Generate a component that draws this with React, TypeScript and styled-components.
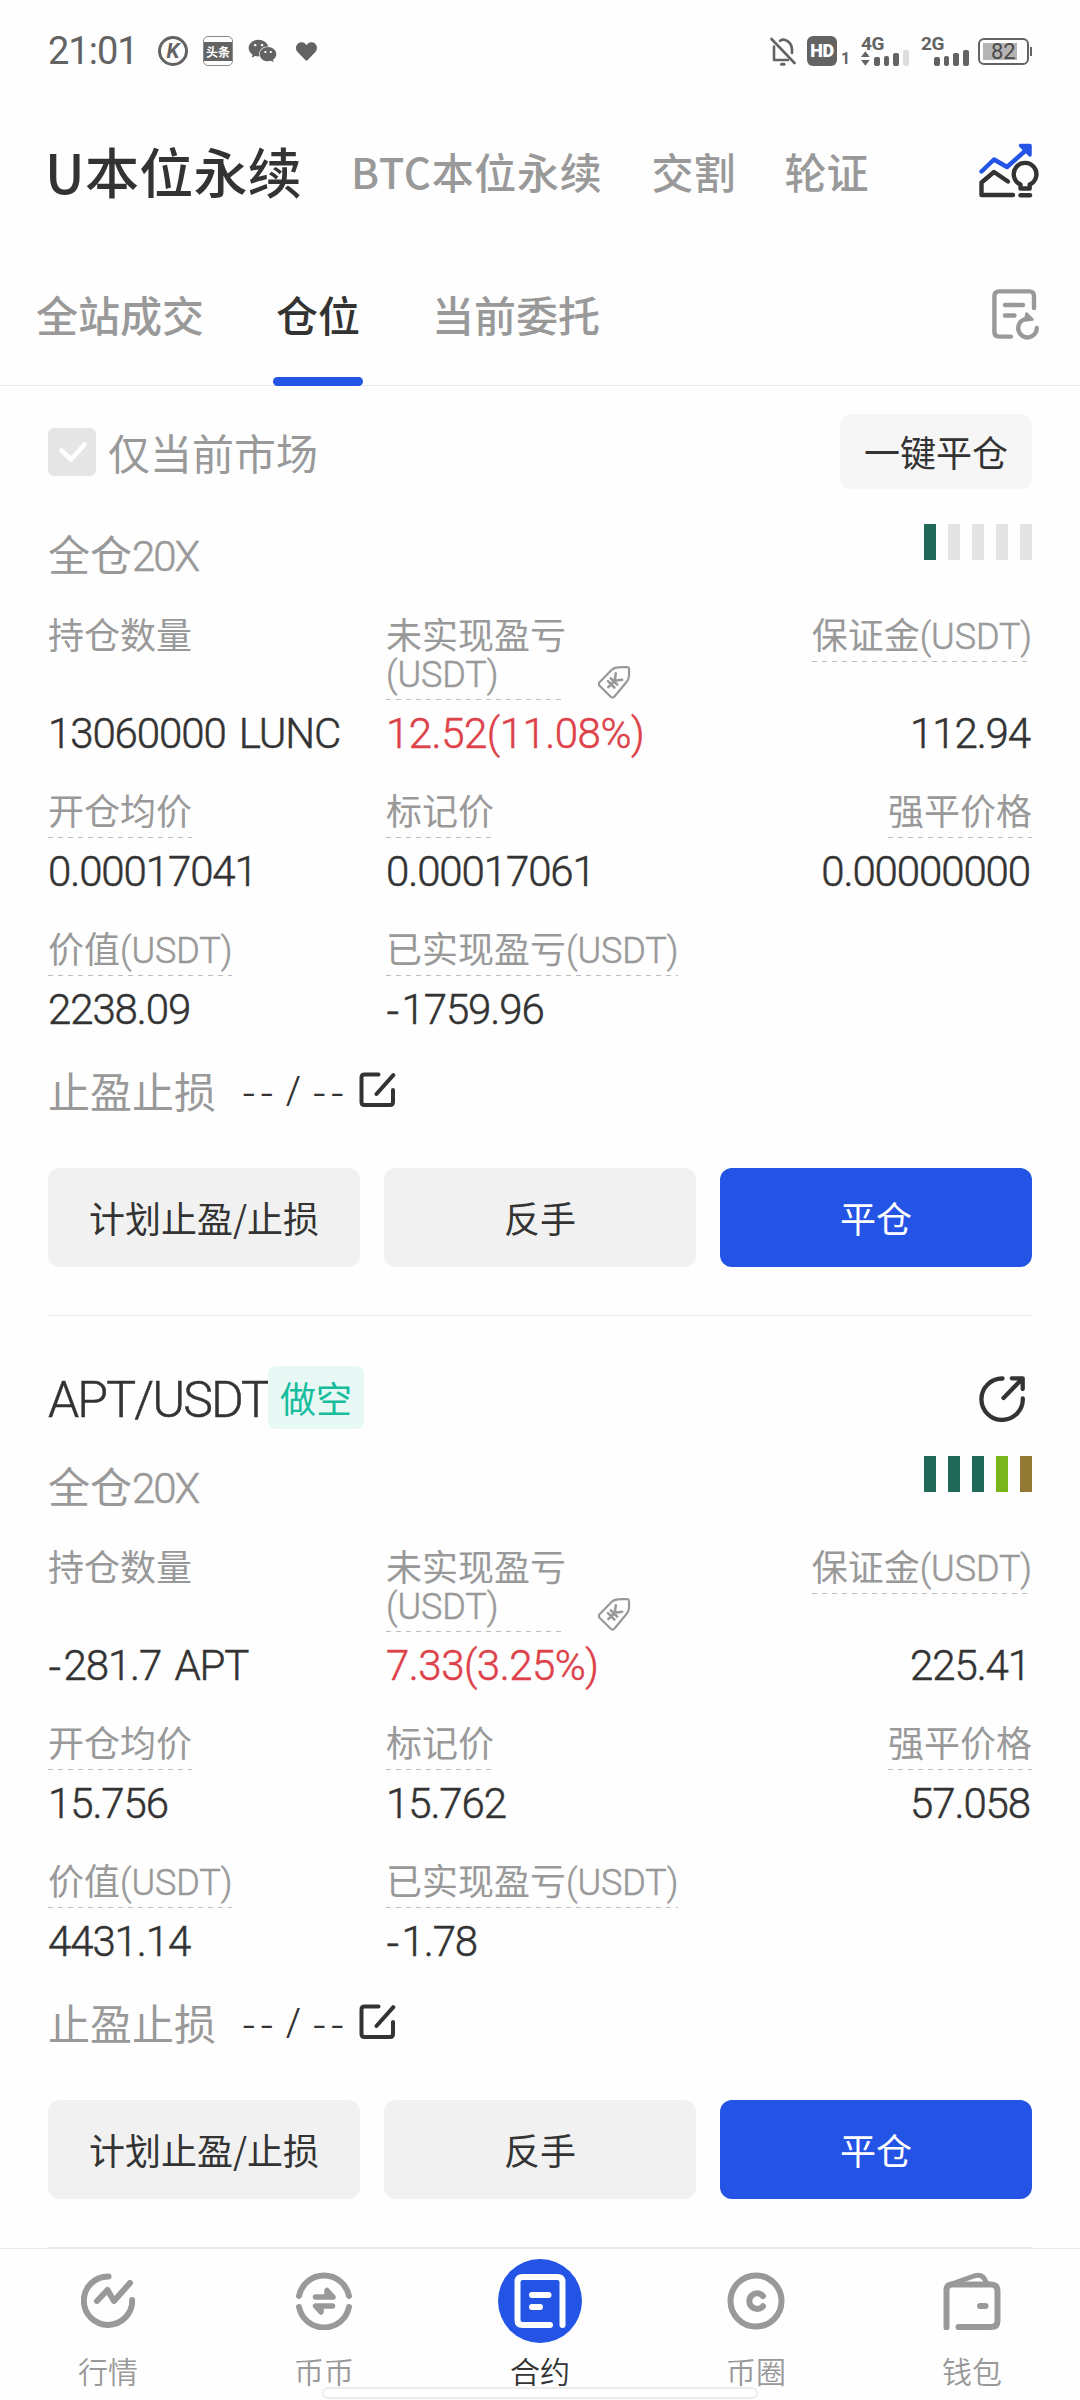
import React from "react";
import styled, { createGlobalStyle } from "styled-components";
import { FaHeart, FaWeixin } from "react-icons/fa";

const INK = "#333333";
const MUTED = "#999999";
const BLUE = "#2454e6";
const STATUS = "#636363";
const CJK = `"Noto Sans CJK SC", sans-serif`;

const GlobalStyle = createGlobalStyle`
  * { box-sizing: border-box; }
  body { margin: 0; background: #fefefe; font-family: ${CJK}; color: ${INK}; }
`;

const Screen = styled.div`
  width: 1080px;
  height: 2400px;
  display: flex;
  flex-direction: column;
  background: #fefefe;
  overflow: hidden;
  & > * { flex-shrink: 0; }
`;

/* Status bar */
const StatusBar = styled.header`
  height: 102px;
  padding: 0 48px 0 48px;
  display: flex;
  align-items: center;
  justify-content: space-between;
  color: ${STATUS};
  font-family: Roboto, sans-serif;
`;
const StatusGroup = styled.div`
  display: flex;
  align-items: center;
`;
const Clock = styled.span`
  width: 110px;
  font-size: 38px;
  line-height: 44px;
  letter-spacing: -1px;
  white-space: nowrap;
`;
const RoundApp = styled.span`
  width: 30px;
  height: 30px;
  border: 3px solid ${STATUS};
  border-radius: 50%;
  display: flex;
  align-items: center;
  justify-content: center;
  font-size: 21px;
  font-weight: 700;
  font-style: italic;
  line-height: 24px;
`;
const NewsApp = styled.span`
  width: 30px;
  height: 30px;
  margin-left: 15px;
  border: 1px solid #8a8a8a;
  border-radius: 5px;
  display: flex;
  align-items: center;
`;
const NewsBand = styled.span`
  width: 28px;
  height: 19px;
  display: flex;
  align-items: center;
  justify-content: center;
  background: ${STATUS};
  color: #fff;
  font: 700 12px/19px ${CJK};
`;
const ChatMark = styled(FaWeixin)`
  width: 29px;
  height: 28px;
  margin-left: 15px;
`;
const HeartMark = styled(FaHeart)`
  width: 23px;
  height: 21px;
  margin-left: 18px;
`;
const HdBadge = styled.span`
  width: 30px;
  height: 30px;
  margin-left: 11px;
  border-radius: 6px;
  display: flex;
  align-items: center;
  justify-content: center;
  background: ${STATUS};
  color: #fff;
  font-size: 18px;
  font-weight: 900;
  line-height: 20px;
  letter-spacing: -0.5px;
`;
const HdSlot = styled.span`
  margin: 16px 0 0 4px;
  width: 8px;
  font-size: 16px;
  font-weight: 700;
  line-height: 16px;
`;
const Signal = styled.div<{ $left: number }>`
  width: 48px;
  height: 30px;
  margin-left: ${(p) => p.$left}px;
  display: flex;
  flex-direction: column;
`;
const SignalName = styled.span`
  height: 14px;
  font-size: 19px;
  font-weight: 700;
  line-height: 16px;
  letter-spacing: -0.3px;
`;
const SignalRow = styled.div`
  height: 16px;
  display: flex;
  align-items: flex-end;
  gap: 4px;
`;
const SignalArrows = styled.svg`
  width: 9px;
  height: 15px;
`;
const SignalBar = styled.i<{ $h: number; $off?: boolean }>`
  width: 6px;
  height: ${(p) => p.$h}px;
  border-radius: 2px;
  background: ${(p) => (p.$off ? "#dddddd" : STATUS)};
`;
const Battery = styled.div`
  width: 51px;
  height: 27px;
  margin-left: 9px;
  padding: 3px;
  border: 2px solid ${STATUS};
  border-radius: 6px;
  display: flex;
`;
const BatteryFill = styled.div`
  width: 34px;
  height: 17px;
  padding-left: 8px;
  background: #b4b4b4;
  color: #4a4a4a;
  font-size: 22px;
  line-height: 18px;
`;
const BatteryTip = styled.i`
  width: 2px;
  height: 9px;
  margin-left: 1px;
  background: ${STATUS};
`;

/* Market header and section tabs */
const MarketHeader = styled.nav`
  height: 142px;
  padding: 0 41px 5px 45px;
  display: flex;
  align-items: center;
  gap: 49px;
`;
const Market = styled.a<{ $active?: boolean; $ls?: number }>`
  font-size: ${(p) => (p.$active ? 54 : 42)}px;
  line-height: 60px;
  font-weight: 500;
  letter-spacing: ${(p) => p.$ls ?? 0}px;
  white-space: nowrap;
  color: ${(p) => (p.$active ? INK : MUTED)};
`;
const IconSlot = styled.span`
  margin-left: auto;
  display: flex;
`;
const TabBar = styled.nav`
  height: 142px;
  padding: 0 40px 0 36px;
  display: flex;
  align-items: center;
  gap: 72px;
  border-bottom: 1px solid #e9e9e9;
`;
const Tab = styled.a<{ $active?: boolean }>`
  position: relative;
  height: 142px;
  font-size: 42px;
  line-height: 139px;
  font-weight: 500;
  color: ${(p) => (p.$active ? INK : MUTED)};
  &::after {
    content: "";
    display: ${(p) => (p.$active ? "block" : "none")};
    position: absolute;
    left: -3px;
    right: -3px;
    bottom: 0;
    height: 9px;
    border-radius: 5px;
    background: ${BLUE};
  }
`;

/* Filter */
const FilterRow = styled.div`
  margin: 28px 48px 0;
  height: 75px;
  display: flex;
  align-items: center;
`;
const CheckBox = styled.span`
  width: 48px;
  height: 48px;
  border-radius: 6px;
  background: #e6e6e6;
  display: flex;
`;
const FilterLabel = styled.span`
  margin-left: 12px;
  font-size: 42px;
  line-height: 60px;
  color: ${MUTED};
`;
const CloseAll = styled.button`
  width: 192px;
  height: 75px;
  margin-left: auto;
  padding: 0;
  border: 0;
  border-radius: 12px;
  background: #f6f6f6;
  color: ${INK};
  font: 400 36px/75px ${CJK};
`;

/* Position card */
const Card = styled.section<{ $top: number }>`
  margin: 0 48px;
  padding-top: ${(p) => p.$top}px;
  border-bottom: 1px solid #e8e8e8;
`;
const CardHead = styled.div`
  height: 63px;
  margin-bottom: 27px;
  display: flex;
  align-items: center;
`;
const Pair = styled.h2`
  width: 220px;
  margin: 5px 0 0;
  font: 300 50px/58px Roboto, sans-serif;
  letter-spacing: -1.9px;
  -webkit-text-stroke: 0.5px currentColor;
  white-space: nowrap;
`;
const Side = styled.span`
  width: 96px;
  height: 63px;
  border-radius: 8px;
  background: #e7f8f5;
  color: #17bd9d;
  font-size: 36px;
  line-height: 63px;
  text-align: center;
`;
const ShareSlot = styled.span`
  margin: 3px 7px 0 auto;
  display: flex;
`;
const LeverageRow = styled.div`
  height: 56px;
  display: flex;
  justify-content: space-between;
`;
const Leverage = styled.span`
  align-self: flex-end;
  margin-bottom: 2px;
  font-size: 42px;
  line-height: 50px;
  color: ${MUTED};
`;
const Latin = styled.span<{ $ls: number }>`
  font-family: Roboto, sans-serif;
  font-weight: 300;
  line-height: 28px;
  letter-spacing: ${(p) => p.$ls}px;
  -webkit-text-stroke: 0.5px currentColor;
`;
const RiskBars = styled.div`
  height: 36px;
  display: flex;
  gap: 12px;
`;
const RiskBar = styled.i<{ $color: string }>`
  width: 12px;
  background: ${(p) => p.$color};
`;
const Metrics = styled.div`
  margin-top: 36px;
  display: flex;
  flex-direction: column;
  gap: 34px;
`;
const MetricRow = styled.div`
  display: grid;
  grid-template-columns: 338px 338px 1fr;
`;
const Metric = styled.div<{ $end?: boolean }>`
  display: flex;
  flex-direction: column;
  justify-content: space-between;
  align-items: ${(p) => (p.$end ? "flex-end" : "flex-start")};
  gap: 10px;
`;
const LabelLine = styled.div`
  display: flex;
  align-items: flex-end;
`;
const Label = styled.span<{ $dashed?: boolean; $width?: number }>`
  width: ${(p) => (p.$width ? `${p.$width}px` : "auto")};
  margin-top: -2px;
  padding-bottom: 10px;
  font-size: 36px;
  line-height: 38px;
  white-space: nowrap;
  color: ${MUTED};
  background: ${(p) =>
    p.$dashed
      ? "repeating-linear-gradient(90deg, #bcbcbc 0 5px, transparent 5px 10px) left bottom / 100% 1px no-repeat"
      : "none"};
`;
const TagSlot = styled.span`
  margin: 0 0 1px 36px;
  display: flex;
`;
const Value = styled.span<{ $color?: string; $end?: boolean }>`
  padding-right: ${(p) => (p.$end ? 2 : 0)}px;
  font: 300 42px/48px Roboto, sans-serif;
  letter-spacing: ${(p) => (p.$color ? -0.5 : -1.1)}px;
  word-spacing: 4px;
  -webkit-text-stroke: 0.5px currentColor;
  white-space: nowrap;
  color: ${(p) => p.$color ?? INK};
`;
const Sign = styled.span`
  font-family: "Noto Sans", sans-serif;
  line-height: 0;
  letter-spacing: 2px;
`;
const StopRow = styled.div`
  height: 60px;
  margin-top: 26px;
  display: flex;
  align-items: center;
  font-size: 42px;
  line-height: 60px;
  color: ${MUTED};
`;
const StopValue = styled.span`
  width: 117px;
  margin: 0 0 0 26px;
  font: 300 42px/60px "Noto Sans", sans-serif;
  letter-spacing: 4.4px;
  word-spacing: -7.5px;
  white-space: pre;
  color: ${INK};
`;
const Actions = styled.div`
  margin: 48px 0 48px;
  display: grid;
  grid-template-columns: repeat(3, 1fr);
  gap: 24px;
`;
const Action = styled.button<{ $primary?: boolean }>`
  height: 99px;
  padding: 0;
  border: 0;
  border-radius: 12px;
  background: ${(p) => (p.$primary ? BLUE : "#f1f1f1")};
  color: ${(p) => (p.$primary ? "#fff" : INK)};
  font: 400 36px/99px ${CJK};
`;

/* Bottom navigation */
const BottomNav = styled.nav`
  position: relative;
  height: 152px;
  border-top: 1px solid #e8e8e8;
  display: grid;
  grid-template-columns: repeat(5, 1fr);
`;
const NavItem = styled.a<{ $active?: boolean }>`
  padding-top: 10px;
  display: flex;
  flex-direction: column;
  align-items: center;
  font-size: 30px;
  font-weight: 350;
  line-height: 38px;
  color: ${(p) => (p.$active ? INK : MUTED)};
`;
const NavIcon = styled.span<{ $active?: boolean }>`
  width: 84px;
  height: 84px;
  margin-bottom: 8px;
  border-radius: 50%;
  display: flex;
  align-items: center;
  justify-content: center;
  background: ${(p) => (p.$active ? BLUE : "transparent")};
`;
const HomeIndicator = styled.i`
  position: absolute;
  left: 322px;
  bottom: 1px;
  width: 436px;
  height: 12px;
  border: 2px solid #ececec;
  border-radius: 6px;
  background: #fff;
`;

const line = {
  fill: "none",
  strokeLinecap: "round" as const,
  strokeLinejoin: "round" as const,
};

const BellOffIcon = () => (
  <svg width="26" height="29" viewBox="0 0 26 29" {...line} stroke={STATUS} strokeWidth="2.6">
    <path d="M1.500 2 24.500 26" />
    <path d="M4 9.500V23H18M10 3.800 12.500 2.500C18 2.800 22 7 22 12.500V16" />
    <path d="M11.500 27.200h2.500" strokeWidth="3" />
  </svg>
);
const TrendIcon = () => (
  <svg width="60" height="56" viewBox="0 0 60 56" {...line} strokeWidth="4.4">
    <path d="M2.500 28.500 15 16.500 28 24 50 4.500" stroke={BLUE} />
    <path d="M41.500 2.500H51V12z" stroke={BLUE} fill={BLUE} strokeWidth="3.500" />
    <path d="M29 38.500 15 29 2.500 39.500V52H34" stroke={INK} />
    <path d="M41.500 45.500V41.500A11.300 11.300 0 1 1 50.700 41.500V45.500Z" stroke={INK} />
    <path d="M41.500 52.300H51" stroke={INK} />
  </svg>
);
const HistoryIcon = () => (
  <svg width="48" height="51" viewBox="0 0 48 51" {...line} stroke={MUTED} strokeWidth="4.400">
    <path d="M42 19V7q0-4.600-4.600-4.600H7Q2.400 2.400 2.400 7v36q0 4.600 4.600 4.600H19" />
    <path d="M13 16H31M13 26.500H22.500" />
    <path d="M32 30.500A9.300 9.300 0 1 0 44.800 39" />
    <path d="M34.500 24.500 40.500 30.500 33 31.500Z" fill={MUTED} strokeWidth="2.500" />
  </svg>
);
const CheckIcon = () => (
  <svg width="48" height="48" viewBox="0 0 48 48" {...line} stroke="#fff" strokeWidth="4.500">
    <path d="M13.500 22.500 23 31.500 36.500 16.500" />
  </svg>
);
const TagIcon = () => (
  <svg width="33" height="33" viewBox="0 0 33 33" {...line} stroke={MUTED} strokeWidth="2.200">
    <path d="M1.800 16 13.500 4Q16 1.500 20 1.300L28.500 1q2.500 0 2.600 2.500L31 10q-.300 3.500-2.500 6L16.500 30.500q-2 2-4 0L1.800 20q-2-2 0-4Z" />
    <g transform="translate(16 15.500) rotate(45)" strokeWidth="2.600">
      <path d="M0 8V-1M-4.500-7 0-1 4.500-7M-4.500 0H4.500M-4.500 4H4.500" />
    </g>
  </svg>
);
const EditIcon = () => (
  <svg width="37" height="36" viewBox="0 0 37 36" {...line} stroke={INK} strokeWidth="4">
    <path d="M19.500 2.500H5.500q-3 0-3 3V30q0 3 3 3H31q3 0 3-3V18" />
    <path d="M34.300 3.200 17.500 22" />
  </svg>
);
const ShareIcon = () => (
  <svg width="46" height="46" viewBox="0 0 46 46" {...line} stroke={INK} strokeWidth="4.300">
    <path d="M23.500 2.500A20.700 20.700 0 1 0 43.800 22.500" />
    <path d="M24.500 22 43 3M32.800 2.300H43.700V13" />
  </svg>
);
const QuotesIcon = () => (
  <svg width="54" height="56" viewBox="0 0 54 56" {...line} stroke={MUTED} strokeWidth="6">
    <path d="M27.500 3.500A24.200 24.200 0 1 0 51.200 27" />
    <path d="M16 28 26.500 17 33 28 49 10" />
  </svg>
);
const SwapIcon = () => (
  <svg width="56" height="58" viewBox="0 0 56 58" {...line} stroke={MUTED} strokeWidth="6">
    <path d="M3 24A25.500 25.500 0 0 1 53 24M3 35A25.500 25.500 0 0 0 53 35" />
    <path d="M19.500 25H37L31 18.500V25M36.500 34H19.500L25 40V34" strokeWidth="5.500" />
  </svg>
);
const ContractIcon = () => (
  <svg width="84" height="84" viewBox="0 0 84 84" {...line} stroke="#fff" strokeWidth="6">
    <path d="M64.500 66V23q0-5-5-5H24.500q-5 0-5 5V61q0 5 5 5H52" />
    <path d="M34 36H50.500M34 48H42" />
  </svg>
);
const CommunityIcon = () => (
  <svg width="58" height="58" viewBox="0 0 58 58" {...line} stroke={MUTED} strokeWidth="6">
    <circle cx="29" cy="29" r="25.500" />
    <path d="M36 24A7.800 7.800 0 1 0 36 34.300" />
  </svg>
);
const WalletIcon = () => (
  <svg width="58" height="58" viewBox="0 0 58 58" {...line} stroke={MUTED} strokeWidth="6">
    <path d="M3.500 55.500V18q0-5.500 5.500-5.500H48q6.500 0 6.500 6.500V49q0 6-6.500 6H15.500" />
    <path d="M8.500 12 31 4Q40 1 43.500 11" strokeWidth="5" />
    <path d="M37 34H42.500" />
  </svg>
);

type MetricData = {
  label: React.ReactNode;
  value: string;
  dashed?: boolean;
  width?: number;
  tag?: boolean;
  color?: string;
};
type Position = {
  pair?: string;
  side?: string;
  risk: string[];
  rows: MetricData[][];
};

const Usdt = () => <Latin $ls={-0.1}>(USDT)</Latin>;

const buildRows = (v: string[]): MetricData[][] => [
  [
    { label: "持仓数量", value: v[0] },
    { label: <>未实现盈亏<br /><Usdt /></>, value: v[1], dashed: true, width: 176, tag: true, color: "#dd4149" },
    { label: <>保证金<Usdt /></>, value: v[2], dashed: true },
  ],
  [
    { label: "开仓均价", value: v[3], dashed: true },
    { label: "标记价", value: v[4], dashed: true },
    { label: "强平价格", value: v[5], dashed: true },
  ],
  [
    { label: <>价值<Usdt /></>, value: v[6], dashed: true },
    { label: <>已实现盈亏<Usdt /></>, value: v[7], dashed: true },
  ],
];

const GREEN = "#206857";
const EMPTY = "#e4e4e4";

const positions: Position[] = [
  {
    risk: [GREEN, EMPTY, EMPTY, EMPTY, EMPTY],
    rows: buildRows(["13060000 LUNC", "12.52(11.08%)", "112.94", "0.00017041", "0.00017061", "0.00000000", "2238.09", "-1759.96"]),
  },
  {
    pair: "APT/USDT",
    side: "做空",
    risk: [GREEN, GREEN, GREEN, "#7ab51d", "#937a34"],
    rows: buildRows(["-281.7 APT", "7.33(3.25%)", "225.41", "15.756", "15.762", "57.058", "4431.14", "-1.78"]),
  },
];

const navItems = [
  { name: "行情", icon: <QuotesIcon /> },
  { name: "币币", icon: <SwapIcon /> },
  { name: "合约", icon: <ContractIcon />, active: true },
  { name: "币圈", icon: <CommunityIcon /> },
  { name: "钱包", icon: <WalletIcon /> },
];

const Amount = ({ text, color, end }: { text: string; color?: string; end?: boolean }) =>
  text.startsWith("-") ? (
    <Value $color={color} $end={end}><Sign>-</Sign>{text.slice(1)}</Value>
  ) : (
    <Value $color={color} $end={end}>{text}</Value>
  );

const PositionCard = ({ data }: { data: Position }) => (
  <Card $top={data.pair ? 50 : 35}>
    {data.pair && (
      <CardHead>
        <Pair>{data.pair}</Pair>
        <Side>{data.side}</Side>
        <ShareSlot><ShareIcon /></ShareSlot>
      </CardHead>
    )}
    <LeverageRow>
      <Leverage>全仓<Latin $ls={-2}>20X</Latin></Leverage>
      <RiskBars>
        {data.risk.map((c, i) => <RiskBar key={i} $color={c} />)}
      </RiskBars>
    </LeverageRow>
    <Metrics>
      {data.rows.map((row, r) => (
        <MetricRow key={r}>
          {row.map((m, i) => (
            <Metric key={i} $end={i === 2}>
              <LabelLine>
                <Label $dashed={m.dashed} $width={m.width}>{m.label}</Label>
                {m.tag && <TagSlot><TagIcon /></TagSlot>}
              </LabelLine>
              <Amount text={m.value} color={m.color} end={i === 2} />
            </Metric>
          ))}
        </MetricRow>
      ))}
    </Metrics>
    <StopRow>
      止盈止损
      <StopValue>-- / --</StopValue>
      <EditIcon />
    </StopRow>
    <Actions>
      <Action>计划止盈/止损</Action>
      <Action>反手</Action>
      <Action $primary>平仓</Action>
    </Actions>
  </Card>
);

export default function App() {
  return (
    <Screen>
      <GlobalStyle />
      <StatusBar>
        <StatusGroup>
          <Clock>21:01</Clock>
          <RoundApp>K</RoundApp>
          <NewsApp><NewsBand>头条</NewsBand></NewsApp>
          <ChatMark />
          <HeartMark />
        </StatusGroup>
        <StatusGroup>
          <BellOffIcon />
          <HdBadge>HD</HdBadge>
          <HdSlot>1</HdSlot>
          <Signal $left={12}>
            <SignalName>4G</SignalName>
            <SignalRow>
              <SignalArrows viewBox="0 0 9 15" fill={STATUS}>
                <path d="M4.500 0 9 6H0ZM4.500 15 0 9H9Z" />
              </SignalArrows>
              <SignalBar $h={9} />
              <SignalBar $h={10} />
              <SignalBar $h={13} />
              <SignalBar $h={16} $off />
            </SignalRow>
          </Signal>
          <Signal $left={12}>
            <SignalName>2G</SignalName>
            <SignalRow>
              <SignalArrows viewBox="0 0 9 15" />
              <SignalBar $h={9} />
              <SignalBar $h={10} />
              <SignalBar $h={13} />
              <SignalBar $h={16} />
            </SignalRow>
          </Signal>
          <Battery><BatteryFill>82</BatteryFill></Battery>
          <BatteryTip />
        </StatusGroup>
      </StatusBar>

      <MarketHeader>
        <Market $active $ls={0.3}>U本位永续</Market>
        <Market $ls={0.7}>BTC本位永续</Market>
        <Market>交割</Market>
        <Market>轮证</Market>
        <IconSlot><TrendIcon /></IconSlot>
      </MarketHeader>

      <TabBar>
        <Tab>全站成交</Tab>
        <Tab $active>仓位</Tab>
        <Tab>当前委托</Tab>
        <IconSlot><HistoryIcon /></IconSlot>
      </TabBar>

      <FilterRow>
        <CheckBox><CheckIcon /></CheckBox>
        <FilterLabel>仅当前市场</FilterLabel>
        <CloseAll>一键平仓</CloseAll>
      </FilterRow>

      {positions.map((p, i) => <PositionCard key={i} data={p} />)}

      <BottomNav>
        {navItems.map((n) => (
          <NavItem key={n.name} $active={n.active}>
            <NavIcon $active={n.active}>{n.icon}</NavIcon>
            {n.name}
          </NavItem>
        ))}
        <HomeIndicator />
      </BottomNav>
    </Screen>
  );
}
